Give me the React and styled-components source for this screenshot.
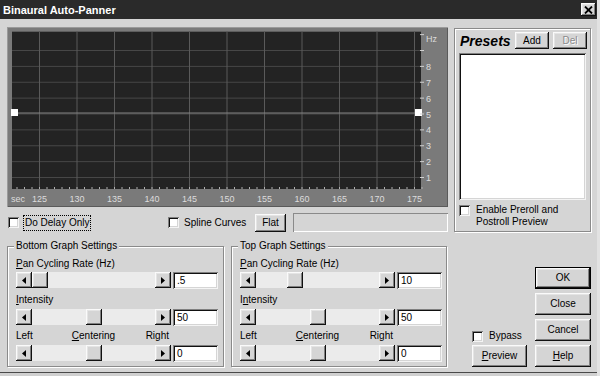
import React from "react";
import styled, { createGlobalStyle, css } from "styled-components";

const GlobalStyle = createGlobalStyle`
  html, body { margin: 0; padding: 0; background: #d5d5d5; }
  body {
    font-family: "Liberation Sans", Arial, sans-serif;
    font-size: 10px;
    line-height: 12px;
    color: #000;
  }
  * { box-sizing: border-box; }
`;

const raised = css`
  background: #d5d5d5;
  box-shadow: inset -1px -1px 0 #111, inset 1px 1px 0 #fafafa,
    inset -2px -2px 0 #808080, inset 2px 2px 0 #e4e4e4;
`;

const sunken = css`
  background: #fff;
  box-shadow: inset 1px 1px 0 #808080, inset -1px -1px 0 #f4f4f4,
    inset 2px 2px 0 #111, inset -2px -2px 0 #d5d5d5;
`;

const etched = css`
  border: 1px solid #8a8a8a;
  box-shadow: inset 1px 1px 0 #fff, 1px 1px 0 #fff;
`;

const Dialog = styled.div`
  width: 600px;
  height: 376px;
  display: flex;
  flex-direction: column;
  background: #d5d5d5;
  border-right: 3px solid #e2e2e2;
  box-shadow: inset 0 -3px 0 #d0d0d0, inset 0 -4px 0 #4a4a4a;
`;

const TitleBar = styled.div`
  height: 19px;
  background: #2a2a2a;
  color: #fff;
  font-weight: bold;
  font-size: 11px;
  display: flex;
  align-items: center;
  justify-content: space-between;
  padding: 0 1px 0 3px;
`;

const CloseButton = styled.div`
  ${raised};
  width: 15px;
  height: 13px;
  display: flex;
  align-items: center;
  justify-content: center;
`;

const Body = styled.div`
  padding: 8px 0 0 7px;
  display: flex;
  flex-direction: column;
`;

const TopSection = styled.div`
  display: flex;
  gap: 6px;
`;

const LeftColumn = styled.div`
  width: 441px;
  display: flex;
  flex-direction: column;
`;

const GraphFrame = styled.div`
  width: 441px;
  height: 180px;
  background: #7a7a7a;
  box-shadow: inset 1px 1px 0 #9a9a9a, inset -1px -1px 0 #5a5a5a;
`;

const OptionsRow = styled.div`
  display: flex;
  align-items: center;
  height: 19px;
  margin-top: 6px;
  padding-left: 1px;
`;

const CheckItem = styled.label`
  display: flex;
  align-items: ${(p) => (p.$top ? "flex-start" : "center")};
  gap: ${(p) => p.$gap || 5}px;
  width: ${(p) => (p.$w ? `${p.$w}px` : "auto")};
  flex: none;
`;

const CheckBox = styled.span`
  ${sunken};
  display: inline-block;
  width: 11px;
  height: 11px;
  flex: none;
  margin-top: ${(p) => p.$mt || 0}px;
`;

const FocusText = styled.span`
  outline: 1px dotted #000;
  padding: 1px 1px;
`;

const Button = styled.div`
  ${raised};
  width: ${(p) => p.$w}px;
  height: ${(p) => p.$h || 22}px;
  margin-left: ${(p) => p.$ml || 0}px;
  display: flex;
  align-items: center;
  justify-content: center;
  flex: none;
  color: ${(p) => (p.$disabled ? "#8a8a8a" : "#000")};
  text-shadow: ${(p) => (p.$disabled ? "1px 1px 0 #fff" : "none")};
  ${(p) =>
    p.$default &&
    css`
      border: 1px solid #000;
    `}
`;

const BlankField = styled.div`
  flex: 1;
  height: 19px;
  margin-left: 7px;
  box-shadow: inset 1px 1px 0 #8a8a8a, inset -1px -1px 0 #fff;
`;

const PresetsBox = styled.div`
  ${etched};
  width: 137px;
  height: 204px;
  margin-top: 1px;
  padding: 3px 3px 0 4px;
  display: flex;
  flex-direction: column;
`;

const PresetsHeader = styled.div`
  display: flex;
  align-items: center;
  height: 17px;
`;

const PresetsTitle = styled.span`
  font-size: 14px;
  font-weight: bold;
  font-style: italic;
  margin-left: 1px;
  width: 55px;
`;

const PresetsList = styled.div`
  ${sunken};
  width: 127px;
  height: 147px;
  margin-top: 4px;
`;

const PrerollRow = styled.div`
  margin-top: 4px;
`;

const BottomSection = styled.div`
  display: flex;
  gap: 7px;
  margin-top: 8px;
  height: 127px;
`;

const GroupBox = styled.fieldset`
  margin: 0;
  width: ${(p) => p.$w}px;
  height: 127px;
  border: 1px solid #8a8a8a;
  box-shadow: inset 1px 1px 0 #fff, 1px 1px 0 #fff;
  padding: 6px 4px 0 8px;
  min-width: 0;
`;

const Legend = styled.legend`
  padding: 0 2px;
  margin-left: -2px;
  background: #d5d5d5;
  line-height: 12px;
`;

const FieldLabel = styled.div`
  height: 12px;
  margin-top: ${(p) => p.$mt || 0}px;
`;

const TriLabel = styled.div`
  display: grid;
  grid-template-columns: 1fr auto 1fr;
  width: 155px;
  height: 12px;
  margin-top: ${(p) => p.$mt || 0}px;

  & > span:last-child {
    justify-self: end;
    padding-right: 2px;
  }
`;

const SliderRow = styled.div`
  display: flex;
  gap: 2px;
  margin-top: ${(p) => p.$mt || 0}px;
`;

const ScrollBar = styled.div`
  display: flex;
  width: 155px;
  height: 16px;
  background: #ebebeb;
`;

const ScrollButton = styled.div`
  ${raised};
  width: 16px;
  height: 16px;
  flex: none;
  display: flex;
  align-items: center;
  justify-content: center;
`;

const Track = styled.div`
  flex: 1;
  display: flex;
`;

const Thumb = styled.div`
  ${raised};
  width: 16px;
  height: 16px;
  margin-left: ${(p) => Math.round(p.$pos * 107)}px;
`;

const EditBox = styled.div`
  ${sunken};
  width: 45px;
  height: 17px;
  padding: 3px 0 0 4px;
`;

const RightArea = styled.div`
  flex: 1;
  display: flex;
  justify-content: flex-end;
  align-items: flex-end;
  gap: 8px;
  padding-right: 6px;
`;

const SideColumn = styled.div`
  display: flex;
  flex-direction: column;
  gap: 3px;
`;

const ButtonColumn = styled.div`
  display: flex;
  flex-direction: column;
  gap: 4px;
`;

const Tri = ({ dir }) => (
  <svg width="4" height="7" viewBox="0 0 4 7">
    <polygon points={dir === "left" ? "4,0 4,7 0,3.5" : "0,0 0,7 4,3.5"} fill="#000" />
  </svg>
);

const Slider = ({ pos, value, mt }) => (
  <SliderRow $mt={mt}>
    <ScrollBar>
      <ScrollButton>
        <Tri dir="left" />
      </ScrollButton>
      <Track>
        <Thumb $pos={pos} />
      </Track>
      <ScrollButton>
        <Tri dir="right" />
      </ScrollButton>
    </ScrollBar>
    <EditBox>{value}</EditBox>
  </SliderRow>
);

const SEC = [125, 130, 135, 140, 145, 150, 155, 160, 165, 170, 175];
const HZ = [1, 2, 3, 4, 5, 6, 7, 8, 9];
const sx = (s) => 32 + ((s - 125) / 5) * 37.5;
const hy = (v) => 150 - (v - 1) * 15.875;

// pan curve drawing: grid, flat line between the two end points, axes
const Graph = () => (
  <svg width="441" height="180" viewBox="0 0 441 180">
    <rect x="5" y="4" width="409" height="158" fill="#232323" />
    <line x1="5" y1="4.5" x2="414" y2="4.5" stroke="#5e5e5e" />
    {HZ.map((v) => (
      <line key={`h${v}`} x1="5" x2="414" y1={hy(v) + 0.5} y2={hy(v) + 0.5} stroke="#474747" />
    ))}
    {SEC.map((s) => (
      <line key={`v${s}`} x1={sx(s) + 0.5} x2={sx(s) + 0.5} y1="4" y2="162" stroke="#5a5a5a" />
    ))}
    {Array.from({ length: 55 }, (_, i) => (
      <line
        key={`t${i}`}
        x1={sx(122 + i) + 0.5}
        x2={sx(122 + i) + 0.5}
        y1="160"
        y2="162"
        stroke="#b0b0b0"
      />
    ))}
    <line x1="7" y1="86" x2="418" y2="86" stroke="#858585" />
    <rect x="4" y="82" width="7" height="7" fill="#fff" />
    <rect x="408" y="82" width="7" height="7" fill="#fff" />
    {[0, 1, 2, 3, 4, 5, 6, 7, 8, 9].map((i) => (
      <line key={`r${i}`} x1="413" x2="417" y1={hy(i + 1) + 0.5} y2={hy(i + 1) + 0.5} stroke="#d0d0d0" />
    ))}
    <g fill="#dcdcdc" fontFamily="Liberation Sans, Arial, sans-serif" fontSize="9">
      <text x="419" y="15">Hz</text>
      {HZ.filter((v) => v !== 9).map((v) => (
        <text key={`l${v}`} x="419" y={hy(v) + 4}>
          {v}
        </text>
      ))}
      <text x="4" y="175">sec</text>
      {SEC.map((s) => (
        <text key={`s${s}`} x={sx(s) + 0.5} y="175" textAnchor="middle">
          {s}
        </text>
      ))}
    </g>
  </svg>
);

const SettingsGroup = ({ title, w, pan, panPos, intensityMark }) => (
  <GroupBox $w={w}>
    <Legend>{title}</Legend>
    <FieldLabel>
      <u>P</u>an Cycling Rate (Hz)
    </FieldLabel>
    <Slider pos={panPos} value={pan} mt={2} />
    <FieldLabel $mt={5}>
      {intensityMark === 0 ? (
        <>
          <u>I</u>ntensity
        </>
      ) : (
        <>
          I<u>n</u>tensity
        </>
      )}
    </FieldLabel>
    <Slider pos={0.5} value="50" mt={3} />
    <TriLabel $mt={4}>
      <span>Left</span>
      <span>
        <u>C</u>entering
      </span>
      <span>Right</span>
    </TriLabel>
    <Slider pos={0.5} value="0" mt={3} />
  </GroupBox>
);

export default function App() {
  return (
    <>
      <GlobalStyle />
      <Dialog>
        <TitleBar>
          <span>Binaural Auto-Panner</span>
          <CloseButton>
            <svg width="9" height="8" viewBox="0 0 9 8">
              <path d="M1 0.5 L8 7.5 M8 0.5 L1 7.5" stroke="#000" strokeWidth="1.8" />
            </svg>
          </CloseButton>
        </TitleBar>
        <Body>
          <TopSection>
            <LeftColumn>
              <GraphFrame>
                <Graph />
              </GraphFrame>
              <OptionsRow>
                <CheckItem $w={160}>
                  <CheckBox />
                  <FocusText>Do Delay Only</FocusText>
                </CheckItem>
                <CheckItem $w={87}>
                  <CheckBox />
                  Spline Curves
                </CheckItem>
                <Button $w={31} $h={18}>
                  Flat
                </Button>
                <BlankField />
              </OptionsRow>
            </LeftColumn>
            <PresetsBox>
              <PresetsHeader>
                <PresetsTitle>Presets</PresetsTitle>
                <Button $w={34} $h={17}>
                  Add
                </Button>
                <Button $w={34} $h={17} $ml={4} $disabled>
                  Del
                </Button>
              </PresetsHeader>
              <PresetsList />
              <PrerollRow>
                <CheckItem $top $gap={6}>
                  <CheckBox $mt={1} />
                  <span>
                    Enable Preroll and
                    <br />
                    Postroll Preview
                  </span>
                </CheckItem>
              </PrerollRow>
            </PresetsBox>
          </TopSection>
          <BottomSection>
            <SettingsGroup title="Bottom Graph Settings" w={217} pan=".5" panPos={0} intensityMark={0} />
            <SettingsGroup title="Top Graph Settings" w={216} pan="10" panPos={0.29} intensityMark={1} />
            <RightArea>
              <SideColumn>
                <CheckItem $gap={6}>
                  <CheckBox />
                  Bypass
                </CheckItem>
                <Button $w={55}>
                  <span>
                    <u>P</u>review
                  </span>
                </Button>
              </SideColumn>
              <ButtonColumn>
                <Button $w={56} $default>
                  OK
                </Button>
                <Button $w={56}>Close</Button>
                <Button $w={56}>Cancel</Button>
                <Button $w={56}>
                  <span>
                    <u>H</u>elp
                  </span>
                </Button>
              </ButtonColumn>
            </RightArea>
          </BottomSection>
        </Body>
      </Dialog>
    </>
  );
}
